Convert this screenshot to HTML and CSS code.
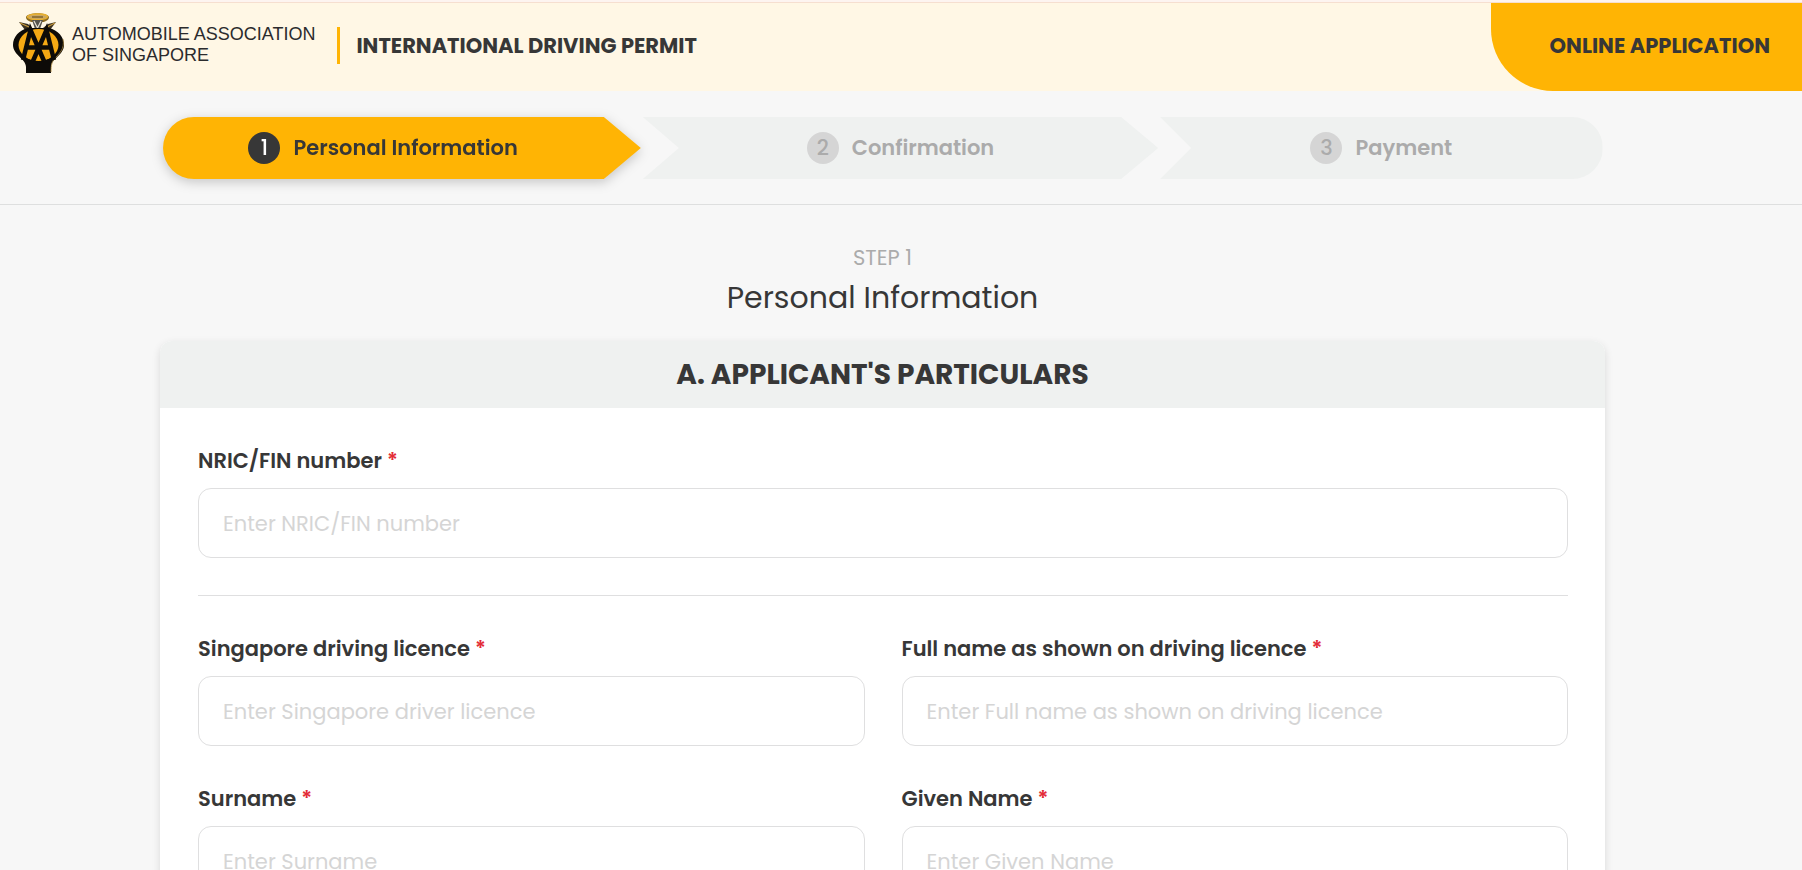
FILE: index.html
```html
<!DOCTYPE html>
<html lang="en">
<head>
    <meta charset="UTF-8">
    <meta name="viewport" content="width=device-width, initial-scale=1.0">
    <title>International Driving Permit</title>
    <link rel="stylesheet" href="styles.css">
</head>
<body>
    <header class="header">
        <a href="#" class="logo">
            <svg class="logo-badge" viewBox="0 0 51 60" aria-hidden="true">
                <path d="M6 9 L15 11 L19 15 L30 15 L35 11 L43 9 L37 17 L12 17 Z" fill="#3a3120"/>
                <path d="M7 10 L16 14 M42 10 L34 14" stroke="#c99a3c" stroke-width="1.2"/>
                <path d="M13 4 C15 -1 34 -1 36 4 C36 7 33 8 31 9 L18 9 C16 8 13 7 13 4 Z" fill="#8a6a22"/>
                <ellipse cx="24.500" cy="3.800" rx="10" ry="2.800" fill="#c9a765" stroke="#e8b02e" stroke-width="1.300"/>
                <path d="M19 4 L30 4" stroke="#5a4210" stroke-width="1"/>
                <path d="M19 7 L30 7 L27 16 L22 16 Z" fill="#55534d"/>
                <path d="M21 8 L24.500 15 L28 8" fill="none" stroke="#e4e0d4" stroke-width="1.200"/>
                <path d="M15 15 C6 17 0 24 0 32 C0 42 13 46 13 54 L13 60 L38 60 L38 54 C38 46 51 42 51 32 C51 24 45 17 36 15 Z" fill="#0d0b08"/>
                <path d="M50 26 C52 36 46 41 41 46 C39 49 38 52 38 59" fill="none" stroke="#a58238" stroke-width="0.800"/>
                <ellipse cx="25.500" cy="32" rx="20" ry="16" fill="#f5a914"/>
                <path d="M10 47 L17.500 17 L31 48 M41 47 L33.500 17 L20 48 M12 34.500 H39" fill="none" stroke="#0d0b08" stroke-width="4.500"/>
            </svg>
            <span class="logo-text">AUTOMOBILE ASSOCIATION<br>OF SINGAPORE</span>
        </a>
        <div class="header-title">INTERNATIONAL DRIVING PERMIT</div>
        <a href="#" class="header-tab">ONLINE APPLICATION</a>
    </header>

    <nav class="steps-bar" aria-label="Application steps">
        <ol class="steps">
            <li class="step-wrap active">
                <div class="step step-first"><span class="step-number">1</span>Personal Information</div>
            </li>
            <li class="step-wrap">
                <div class="step step-middle"><span class="step-number">2</span>Confirmation</div>
            </li>
            <li class="step-wrap">
                <div class="step step-last"><span class="step-number">3</span>Payment</div>
            </li>
        </ol>
    </nav>

    <main class="content">
        <p class="step-label">STEP 1</p>
        <h1>Personal Information</h1>

        <form class="card">
            <h2>A. APPLICANT'S PARTICULARS</h2>
            <div class="card-body">
                <div class="form-group">
                    <label for="nric">NRIC/FIN number <span class="required">*</span></label>
                    <input type="text" id="nric" name="nric" placeholder="Enter NRIC/FIN number" required>
                </div>
                <hr>
                <div class="form-grid">
                    <div class="form-group">
                        <label for="licence">Singapore driving licence <span class="required">*</span></label>
                        <input type="text" id="licence" name="licence" placeholder="Enter Singapore driver licence" required>
                    </div>
                    <div class="form-group">
                        <label for="fullName">Full name as shown on driving licence <span class="required">*</span></label>
                        <input type="text" id="fullName" name="fullName" placeholder="Enter Full name as shown on driving licence" required>
                    </div>
                    <div class="form-group">
                        <label for="surname">Surname <span class="required">*</span></label>
                        <input type="text" id="surname" name="surname" placeholder="Enter Surname" required>
                    </div>
                    <div class="form-group">
                        <label for="givenName">Given Name <span class="required">*</span></label>
                        <input type="text" id="givenName" name="givenName" placeholder="Enter Given Name" required>
                    </div>
                </div>
            </div>
        </form>
    </main>
</body>
</html>
```
FILE: styles.css
```css
* {
    box-sizing: border-box;
}
body {
    margin: 0;
    border-top: 2px solid #fdf4f0;
    font-family: Poppins, Inter, sans-serif;
    font-size: 21px;
    line-height: 30px;
    color: #373737;
    background-color: #f7f7f7;
}

/* Header */
.header {
    display: flex;
    align-items: center;
    height: 89px;
    border-top: 1px solid #f6dfd0;
    background-color: #fff7e5;
}
.logo {
    display: flex;
    align-items: center;
    gap: 8px;
    margin-bottom: 4px;
    padding-left: 13px;
    color: #2b2b2d;
    text-decoration: none;
}
.logo-badge {
    width: 51px;
    height: 60px;
    margin-bottom: 4px;
}
.logo-text {
    font-family: "Liberation Sans", Arial, sans-serif;
    font-size: 18px;
    line-height: 21px;
}
.header-title {
    margin-bottom: 4px;
    margin-left: 22px;
    padding-left: 16px;
    border-left: 3px solid #ffb404;
    font-size: 21px;
    font-weight: 700;
    line-height: 37px;
}
.header-tab {
    display: flex;
    align-items: center;
    align-self: stretch;
    margin-left: auto;
    padding: 0 32px 2px 59px;
    border-bottom-left-radius: 62px;
    background-color: #ffb404;
    color: #373737;
    font-size: 21px;
    font-weight: 700;
    text-decoration: none;
}

/* Steps */
.steps-bar {
    padding: 26px 37px 25px 0;
    border-bottom: 1px solid #dedfdf;
}
.steps {
    display: grid;
    grid-template-columns: 478fr 515fr 442fr;
    gap: 2px;
    max-width: 1440px;
    margin: 0 auto;
    padding: 0;
    list-style: none;
}
.step {
    display: flex;
    align-items: center;
    justify-content: center;
    gap: 13px;
    height: 62px;
    background-color: #eff1f0;
    color: #ababab;
    font-weight: 600;
}
.step-first {
    padding-right: 37px;
    border-radius: 31px 0 0 31px;
    clip-path: polygon(0 0, calc(100% - 37px) 0, 100% 50%, calc(100% - 37px) 100%, 0 100%);
}
.step-middle {
    clip-path: polygon(0 0, calc(100% - 37px) 0, 100% 50%, calc(100% - 37px) 100%, 0 100%, 36px 50%);
}
.step-last {
    border-radius: 0 31px 31px 0;
    clip-path: polygon(0 0, 100% 0, 100% 100%, 0 100%, 31px 50%);
}
.step-number {
    width: 32px;
    height: 32px;
    border-radius: 50%;
    background-color: #d5d5d5;
    font-weight: 500;
    line-height: 32px;
    text-align: center;
}
.active {
    filter: drop-shadow(0 3px 6px rgba(0, 0, 0, 0.2));
}
.active .step {
    background-color: #ffb404;
    color: #373737;
}
.active .step-number {
    background-color: #373737;
    color: #ffffff;
}

/* Page content */
.content {
    padding: 38px 37px 40px 0;
}
.step-label {
    margin: 0;
    color: #ababab;
    text-align: center;
}
h1 {
    margin: 2px 0 21px;
    font-size: 30px;
    font-weight: 400;
    line-height: 45px;
    text-align: center;
}
.card {
    max-width: 1445px;
    margin: 0 auto;
    border-radius: 12px;
    background-color: #ffffff;
    box-shadow: 0 3px 8px rgba(0, 0, 0, 0.12);
}
h2 {
    margin: 0;
    border-radius: 12px 12px 0 0;
    background-color: #eff1f0;
    font-size: 28px;
    font-weight: 700;
    line-height: 67px;
    text-align: center;
}
.card-body {
    padding: 38px 37px 38px 38px;
}
.form-grid {
    display: grid;
    grid-template-columns: 1fr 1fr;
    gap: 38px 37px;
}
label {
    display: block;
    margin-bottom: 12px;
    font-weight: 600;
}
.required {
    color: #e32b36;
}
input[type="text"] {
    width: 100%;
    height: 70px;
    padding: 0 24px;
    border: 1px solid #dfdfe0;
    border-radius: 13px;
    background-color: #ffffff;
    color: #373737;
    font-family: inherit;
    font-size: 21px;
}
input[type="text"]::placeholder {
    color: #d5d5d5;
    opacity: 1;
}
input[type="text"]:focus {
    border-color: #ffb404;
    outline: none;
}
hr {
    margin: 37px 0 38px;
    border: none;
    border-top: 1px solid #dfdfe0;
}
```
